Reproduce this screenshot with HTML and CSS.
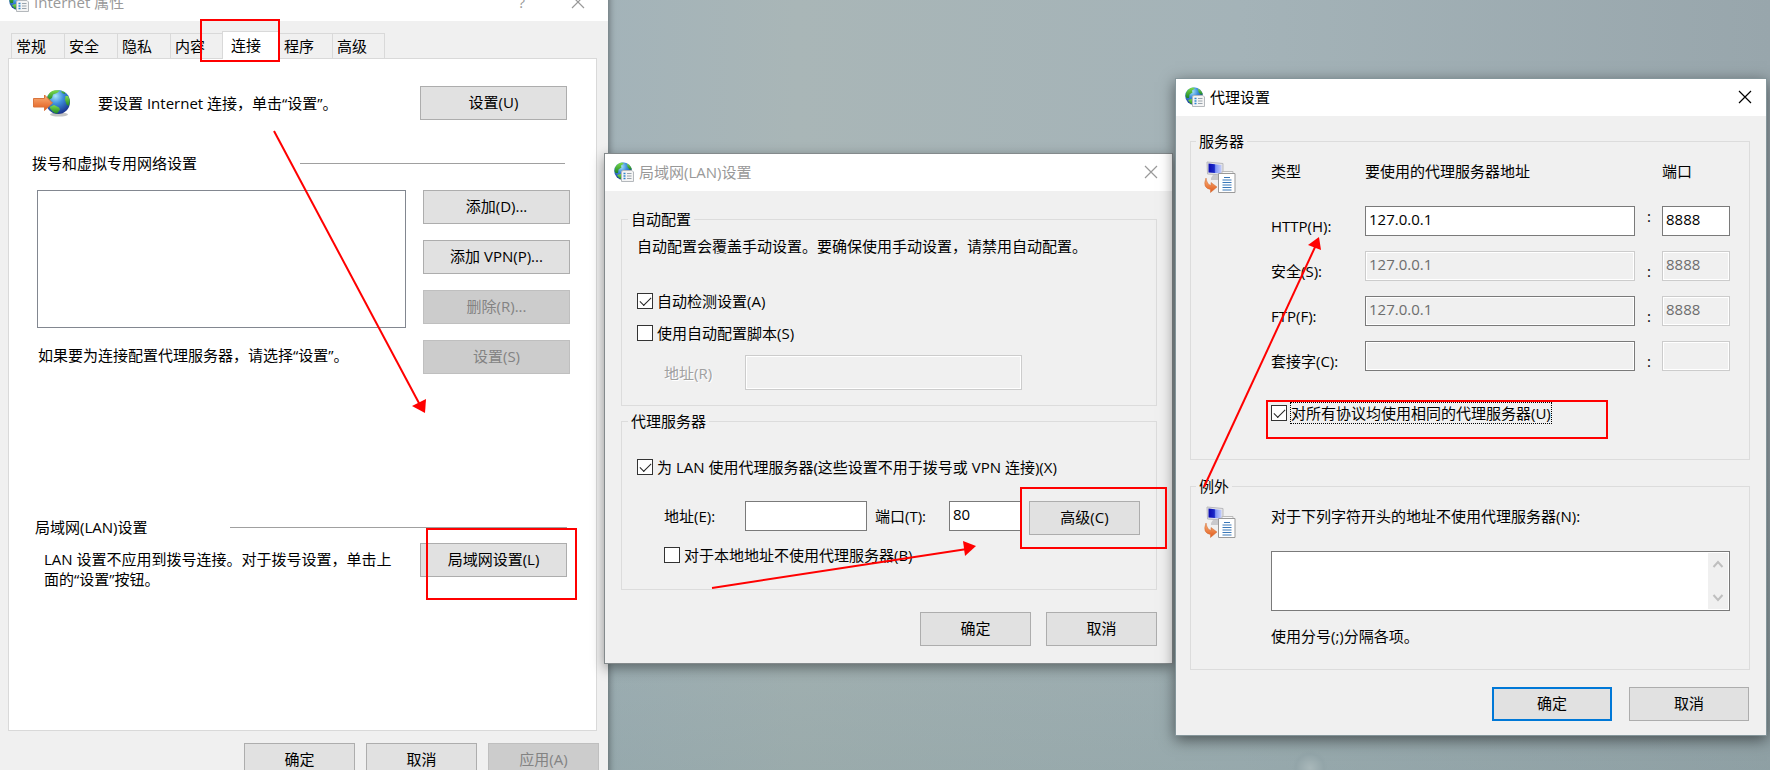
FILE: index.html
```html
<!DOCTYPE html>
<html lang="zh-CN">
  <head>
    <meta charset="UTF-8" />
    <meta name="viewport" content="width=device-width, initial-scale=1.0" />
    <title>Internet 属性</title>
    <link rel="stylesheet" href="styles.css">
  </head>
  <body>
    <!-- shared icons -->
    <svg class="defs" width="0" height="0" aria-hidden="true">
      <defs>
        <radialGradient id="sea" cx="0.4" cy="0.25" r="0.8">
          <stop offset="0" stop-color="#a9e4fb" />
          <stop offset="0.4" stop-color="#3f8fdc" />
          <stop offset="1" stop-color="#152a86" />
        </radialGradient>
        <linearGradient id="land" x1="0" y1="0" x2="0" y2="1">
          <stop offset="0" stop-color="#7fdc4a" />
          <stop offset="1" stop-color="#1c8428" />
        </linearGradient>
        <linearGradient id="orange" x1="0" y1="0" x2="0" y2="1">
          <stop offset="0" stop-color="#fbb27a" />
          <stop offset="1" stop-color="#e0591a" />
        </linearGradient>
        <linearGradient id="screen" x1="0" y1="0" x2="1" y2="0">
          <stop offset="0" stop-color="#0a0ab0" />
          <stop offset="0.45" stop-color="#1a28c8" />
          <stop offset="0.55" stop-color="#7f95f5" />
          <stop offset="1" stop-color="#c3cdfb" />
        </linearGradient>
      </defs>
      <symbol id="icon-globe-list" viewBox="0 0 20 20">
        <circle cx="9" cy="9" r="8.8" fill="url(#sea)" />
        <path d="M1 6Q3 1 8 .5L10 1.5 7 3.5 7.500 5.500 4.500 7.500 4 11 1.500 11Q0 9 1 6Z" fill="url(#land)" />
        <path d="M13 1.500Q17 3.500 17.700 7.500L15.500 7.500 13.500 5Z" fill="url(#land)" />
        <path d="M3 13L7 12 8.500 17.700Q5 17 3 13Z" fill="url(#land)" />
        <path d="M7.500 9.500L9 8.500H18L19.500 10V19.500H7.500Z" fill="#f4f4f4" stroke="#b4b8bc" />
        <path d="M9.500 11.500h2M9.500 14h2M9.500 16.500h2" stroke="#2f86d0" stroke-width="1.400" />
        <path d="M13 11.500h4.500M13 14h4.500M13 16.500h4.500" stroke="#9aa4ad" />
      </symbol>
      <symbol id="icon-connect" viewBox="0 0 38 28">
        <ellipse cx="26" cy="25.500" rx="9" ry="2" fill="#c4c4c4" />
        <circle cx="25" cy="13" r="12" fill="url(#sea)" />
        <path d="M14 9Q16 2 22 1.200L27 1.500 24 4 20 5.500 19 9 15 11.500Z" fill="url(#land)" />
        <path d="M16.500 18L21 16 26 18.500 27 20.500 24 24.800Q19 23.500 16.500 18Z" fill="url(#land)" />
        <path d="M32.500 7L35 7 36.800 11 36 17 33.500 15.500 32 11Z" fill="url(#land)" />
        <path d="M28 1.500L32 3.500 32 5 29 4Z" fill="url(#land)" />
        <path d="M.5 9.500H11.500V6L19.500 14 11.500 21.500V18H.5Z" fill="url(#orange)" stroke="#d9743c" />
      </symbol>
      <symbol id="icon-proxy" viewBox="0 0 32 32">
        <path d="M3 1L19 2.500V14L3.500 13Z" fill="#e4e4e6" stroke="#b9b9bd" />
        <path d="M4.500 2.500L17.500 4V12.500L4.500 11.500Z" fill="url(#screen)" />
        <path d="M9 14h5v3h3v2H7v-2z" fill="#c9c9cc" />
        <path d="M18 10.500H29V28H18Z" fill="#f6f6f6" stroke="#bbb" />
        <path d="M14.500 12.500H31V31.500H14.500Z" fill="#fff" stroke="#9a9a9a" />
        <path d="M20 16.500h6M18.500 19h9M18.500 21.500h9M18.500 24h9M18.500 26.500h9M18.500 29h9" stroke="#3a78b8" />
        <path d="M2 17Q-2 27 6.500 28.500V31.500L13 26 7 21.500V24.500Q3 23.500 2 17Z" fill="url(#orange)" stroke="#cf6a33" stroke-width="0.500" />
      </symbol>
      <symbol id="icon-close" viewBox="0 0 14 14">
        <path d="M1 1L13 13M13 1L1 13" fill="none" stroke="currentColor" stroke-width="1.200" />
      </symbol>
    </svg>

    <main class="desktop">
      <section class="window internet">
        <header class="titlebar">
          <svg class="app-icon"><use href="#icon-globe-list" /></svg>
          <h2>Internet 属性</h2>
          <button type="button" class="help-btn" aria-label="帮助">?</button>
          <button type="button" class="close-btn" aria-label="关闭"><svg><use href="#icon-close" /></svg></button>
        </header>
        <div class="tabs" role="tablist">
          <button type="button" role="tab">常规</button>
          <button type="button" role="tab">安全</button>
          <button type="button" role="tab">隐私</button>
          <button type="button" role="tab">内容</button>
          <button type="button" role="tab" class="active" aria-selected="true">连接</button>
          <button type="button" role="tab">程序</button>
          <button type="button" role="tab">高级</button>
        </div>
        <div class="panel">
          <div class="setup">
            <svg class="connect-icon"><use href="#icon-connect" /></svg>
            <p>要设置 Internet 连接，单击“设置”。</p>
            <button type="button" class="btn">设置(U)</button>
          </div>
          <div class="heading dial-heading">
            <h3>拨号和虚拟专用网络设置</h3>
            <hr>
          </div>
          <div class="dial">
            <div class="dial-left">
              <div class="listbox" role="listbox" aria-label="拨号和虚拟专用网络设置"></div>
              <p>如果要为连接配置代理服务器，请选择“设置”。</p>
            </div>
            <div class="dial-buttons">
              <button type="button" class="btn">添加(D)...</button>
              <button type="button" class="btn">添加 VPN(P)...</button>
              <button type="button" class="btn" disabled>删除(R)...</button>
              <button type="button" class="btn" disabled>设置(S)</button>
            </div>
          </div>
          <div class="heading lan-heading">
            <h3>局域网(LAN)设置</h3>
            <hr>
          </div>
          <div class="lan-row">
            <p>LAN 设置不应用到拨号连接。对于拨号设置，单击上面的“设置”按钮。</p>
            <button type="button" class="btn">局域网设置(L)</button>
          </div>
        </div>
        <footer class="actions">
          <button type="button" class="btn">确定</button>
          <button type="button" class="btn">取消</button>
          <button type="button" class="btn" disabled>应用(A)</button>
        </footer>
      </section>

      <section class="window lan">
        <header class="titlebar">
          <svg class="app-icon"><use href="#icon-globe-list" /></svg>
          <h2>局域网(LAN)设置</h2>
          <button type="button" class="close-btn" aria-label="关闭"><svg><use href="#icon-close" /></svg></button>
        </header>
        <form class="lan-form">
          <fieldset class="auto">
            <legend>自动配置</legend>
            <p>自动配置会覆盖手动设置。要确保使用手动设置，请禁用自动配置。</p>
            <div class="check">
              <input type="checkbox" id="auto-detect" checked />
              <label for="auto-detect">自动检测设置(A)</label>
            </div>
            <div class="check">
              <input type="checkbox" id="auto-script" />
              <label for="auto-script">使用自动配置脚本(S)</label>
            </div>
            <div class="script-row">
              <label for="script-url" class="dim">地址(R)</label>
              <input type="text" id="script-url" class="field" disabled />
            </div>
          </fieldset>
          <fieldset class="proxy">
            <legend>代理服务器</legend>
            <div class="check">
              <input type="checkbox" id="use-proxy" checked />
              <label for="use-proxy">为 LAN 使用代理服务器(这些设置不用于拨号或 VPN 连接)(X)</label>
            </div>
            <div class="address-row">
              <label for="address">地址(E):</label>
              <input type="text" id="address" class="field" />
              <label for="port" class="port-label">端口(T):</label>
              <input type="text" id="port" class="field port" value="80" />
              <button type="button" class="btn">高级(C)</button>
            </div>
            <div class="check nested">
              <input type="checkbox" id="bypass-local" />
              <label for="bypass-local">对于本地地址不使用代理服务器(B)</label>
            </div>
          </fieldset>
          <footer class="actions">
            <button type="button" class="btn">确定</button>
            <button type="button" class="btn">取消</button>
          </footer>
        </form>
      </section>

      <section class="window proxy-settings">
        <header class="titlebar">
          <svg class="app-icon"><use href="#icon-globe-list" /></svg>
          <h2>代理设置</h2>
          <button type="button" class="close-btn" aria-label="关闭"><svg><use href="#icon-close" /></svg></button>
        </header>
        <form class="proxy-form">
          <fieldset class="servers">
            <legend>服务器</legend>
            <div class="with-icon">
              <svg class="proxy-icon"><use href="#icon-proxy" /></svg>
              <div class="content">
                <div class="server-row head">
                  <span>类型</span>
                  <span>要使用的代理服务器地址</span>
                  <span></span>
                  <span>端口</span>
                </div>
                <div class="server-row first">
                  <label for="http">HTTP(H):</label>
                  <input type="text" id="http" class="field" value="127.0.0.1" />
                  <span class="colon">:</span>
                  <input type="text" class="field" aria-label="HTTP 端口" value="8888" />
                </div>
                <div class="server-row">
                  <label for="secure">安全(S):</label>
                  <input type="text" id="secure" class="field" value="127.0.0.1" disabled />
                  <span class="colon">:</span>
                  <input type="text" class="field" aria-label="安全端口" value="8888" disabled />
                </div>
                <div class="server-row">
                  <label for="ftp">FTP(F):</label>
                  <input type="text" id="ftp" class="field dark" value="127.0.0.1" disabled />
                  <span class="colon">:</span>
                  <input type="text" class="field" aria-label="FTP 端口" value="8888" disabled />
                </div>
                <div class="server-row">
                  <label for="socks">套接字(C):</label>
                  <input type="text" id="socks" class="field dark" disabled />
                  <span class="colon">:</span>
                  <input type="text" class="field" aria-label="套接字端口" disabled />
                </div>
                <div class="check">
                  <input type="checkbox" id="same-proxy" checked />
                  <label for="same-proxy" class="focused">对所有协议均使用相同的代理服务器(U)</label>
                </div>
              </div>
            </div>
          </fieldset>
          <fieldset class="exceptions">
            <legend>例外</legend>
            <div class="with-icon">
              <svg class="proxy-icon"><use href="#icon-proxy" /></svg>
              <div class="content">
                <label for="bypass">对于下列字符开头的地址不使用代理服务器(N):</label>
                <div class="memo">
                  <textarea id="bypass"></textarea>
                  <div class="scroll" aria-hidden="true">
                    <svg viewBox="0 0 12 8"><path d="M1.500 7L6 2 10.500 7" /></svg>
                    <svg viewBox="0 0 12 8"><path d="M1.500 1L6 6 10.500 1" /></svg>
                  </div>
                </div>
                <p>使用分号(;)分隔各项。</p>
              </div>
            </div>
          </fieldset>
          <footer class="actions">
            <button type="button" class="btn default">确定</button>
            <button type="button" class="btn">取消</button>
          </footer>
        </form>
      </section>

      <!-- red boxes and arrows over the windows -->
      <svg class="marks" width="1770" height="770" aria-hidden="true">
        <g class="boxes">
          <rect x="201" y="20" width="78" height="41" />
          <rect x="427" y="529" width="149" height="70" />
          <rect x="1021" y="488" width="145" height="60" />
          <rect x="1267" y="401" width="340" height="37" />
        </g>
        <g class="arrows">
          <path d="M274 131L420 405" />
          <path d="M712 588L967 549" />
          <path d="M1204 487L1316 245" />
        </g>
        <g class="heads">
          <path d="M425 413L412 406L426 399Z" />
          <path d="M976 546L963 541L965 556Z" />
          <path d="M1319 237L1308 245L1321 250Z" />
        </g>
      </svg>
    </main>
  </body>
</html>
```

FILE: styles.css
```css
* {
  box-sizing: border-box;
}
body {
  margin: 0;
  overflow: hidden;
  font: 15px/20px "Open Sans", "Noto Sans CJK SC", sans-serif;
  color: #000;
}
h2,
h3,
p {
  margin: 0;
  font-size: 15px;
  font-weight: normal;
}
button,
input,
textarea {
  font: inherit;
  color: inherit;
}
.defs {
  position: absolute;
}
.desktop {
  position: relative;
  min-height: 100vh;
  overflow: hidden;
  background:
    radial-gradient(circle at 1310px 768px, #a9b8ba 0, #93a5a9 14px, transparent 18px),
    linear-gradient(to bottom, transparent 60%, rgba(120, 145, 145, 0.3)),
    linear-gradient(to right, #a3b3b9 34%, #a9b6b7 45%, #a4b3b8 70%, #98a6ac);
}

/* windows */
.window {
  position: absolute;
  z-index: 0;
  background-color: #f0f0f0;
}
.internet {
  left: 0;
  top: -16px;
  width: 608px;
  box-shadow: 0 0 8px rgba(0, 0, 0, 0.5);
}
.lan {
  left: 604px;
  top: 153px;
  width: 569px;
  border: 1px solid #848a8c;
  box-shadow: 0 4px 12px rgba(0, 0, 0, 0.4);
}
.proxy-settings {
  left: 1175px;
  top: 78px;
  width: 592px;
  border: 1px solid #84959a;
  box-shadow: 0 4px 14px rgba(0, 0, 0, 0.5);
}
.titlebar {
  display: flex;
  align-items: center;
  height: 37px;
  padding: 0 14px 1px 9px;
  background-color: #fff;
}
.titlebar h2 {
  flex: 1;
  margin-left: 5px;
}
.internet .titlebar,
.lan .titlebar {
  color: #999;
}
.internet .titlebar {
  padding-right: 23px;
}
.app-icon {
  width: 20px;
  height: 20px;
}
.close-btn,
.help-btn {
  display: flex;
  padding: 0;
  border: none;
  background: none;
}
.help-btn {
  margin-right: 46px;
}
.close-btn svg {
  width: 14px;
  height: 14px;
}

/* controls */
.btn {
  width: 111px;
  height: 34px;
  padding: 0 0 2px;
  border: 1px solid #adadad;
  background-color: #e1e1e1;
}
.btn:disabled {
  border-color: #bfbfbf;
  background-color: #ccc;
  color: #838383;
}
.btn.default {
  border: 2px solid #0078d7;
}
.field {
  min-width: 0;
  width: 100%;
  height: 30px;
  padding: 0 4px 4px 3px;
  border: 1px solid #7a7a7a;
  border-radius: 0;
  background-color: #fff;
}
.field:disabled {
  border-color: #ccc;
  background-color: #f0f0f0;
  color: #6d6d6d;
  box-shadow: inset 0 0 0 1px #fff;
}
.field.dark {
  border-color: #7a7a7a;
}
.check {
  display: flex;
  align-items: center;
}
.check input {
  appearance: none;
  display: grid;
  width: 16px;
  height: 16px;
  margin: 0 4px 0 0;
  border: 1px solid #333;
  background-color: #fff;
}
.check input:checked::before {
  content: "";
  width: 10px;
  height: 5px;
  margin: 3px 2px;
  border-left: 1px solid #222;
  border-bottom: 1px solid #222;
  transform: rotate(-45deg);
}
fieldset {
  min-width: 0;
  margin: 0;
  padding: 0 16px 0 15px;
  border: 1px solid #dcdcdc;
}
legend {
  margin-left: -9px;
  padding: 0 3px;
}
.actions {
  display: flex;
  justify-content: flex-end;
}

/* Internet properties */
.tabs {
  display: flex;
  align-items: flex-end;
  height: 37px;
  padding-left: 11px;
}
.tabs button {
  width: 53px;
  height: 25px;
  padding: 0 0 0 4px;
  border: 1px solid #d9d9d9;
  border-width: 1px 0 0 1px;
  background-color: #f0f0f0;
  text-align: left;
}
.tabs button:last-child {
  border-right-width: 1px;
}
.tabs .active {
  z-index: 1;
  width: 58px;
  height: 28px;
  margin: 0 -1px -1px;
  padding: 0 0 2px 8px;
  background-color: #fff;
}
.panel {
  min-height: 673px;
  margin: 0 11px 0 8px;
  padding: 27px 29px 0 23px;
  border: 1px solid #d9d9d9;
  background-color: #fff;
}
.setup {
  display: flex;
  align-items: center;
}
.connect-icon {
  width: 38px;
  height: 28px;
  margin: 0 27px 0 1px;
}
.panel .btn {
  flex: none;
  width: 147px;
}
.setup .btn {
  margin-left: auto;
}
.heading {
  display: grid;
  align-items: center;
}
.heading hr {
  width: 100%;
  margin: 0;
  border: none;
  border-top: 1px solid #a0a0a0;
}
.dial-heading {
  grid-template-columns: 268px 1fr;
  margin: 33px 2px 0 0;
}
.lan-heading {
  grid-template-columns: 195px 1fr;
  margin: 143px 0 0 3px;
}
.dial {
  display: flex;
  gap: 17px;
  margin: 17px -3px 0 5px;
}
.dial-left {
  flex: 1;
}
.dial-left p {
  margin: 17px 0 0 1px;
}
.listbox {
  height: 138px;
  border: 1px solid #828790;
}
.dial-buttons {
  display: grid;
  gap: 16px;
}
.lan-row {
  display: flex;
  justify-content: space-between;
  padding: 6px 0 0 12px;
}
.lan-row p {
  width: 355px;
  padding-top: 6px;
}
.internet .actions {
  gap: 11px;
  padding: 12px 9px;
}

/* LAN settings */
.lan-form {
  padding: 18px 15px 17px 16px;
}
.auto {
  padding-bottom: 15px;
}
.auto p {
  margin: 7px 0 35px;
}
.auto .check {
  margin-bottom: 12px;
}
.script-row {
  display: grid;
  grid-template-columns: 81px 277px;
  align-items: center;
  padding-left: 27px;
}
.script-row .field {
  height: 35px;
}
.dim {
  color: #a0a0a0;
  text-shadow: 1px 1px #fff;
}
.proxy {
  margin-top: 5px;
  padding: 26px 16px 24px 15px;
}
.address-row {
  display: grid;
  grid-template-columns: 81px 122px 82px 72px 1fr;
  align-items: start;
  margin: 24px 0 10px;
  padding-left: 27px;
}
.address-row label {
  line-height: 30px;
}
.port-label {
  padding-left: 8px;
}
.port {
  border-right: none;
}
.address-row .btn {
  justify-self: end;
}
.nested {
  padding-left: 27px;
}
.lan-form .actions {
  gap: 15px;
  margin-top: 22px;
}

/* proxy settings */
.proxy-form {
  padding: 15px 16px 14px 14px;
}
.with-icon {
  display: flex;
  gap: 35px;
  padding-top: 10px;
}
.proxy-icon {
  flex: none;
  width: 32px;
  height: 32px;
}
.content {
  flex: 1;
}
.servers,
.exceptions {
  padding: 0 19px 0 13px;
}
.servers legend,
.exceptions legend {
  margin-left: -8px;
}
.server-row {
  display: grid;
  grid-template-columns: 94px 1fr 27px 68px;
  align-items: end;
  margin-bottom: 15px;
}
.server-row.head {
  margin-bottom: 25px;
}
.server-row .colon {
  padding-left: 12px;
}
.server-row.first .colon {
  align-self: start;
}
.servers .check {
  margin: 32px 0 36px;
}
.servers .check input {
  margin-right: 4px;
}
.focused {
  outline: 1px dotted #000;
}
.exceptions {
  margin-top: 16px;
}
.exceptions label {
  display: block;
}
.memo {
  display: flex;
  height: 60px;
  margin: 25px 0 15px;
  padding: 1px;
  border: 1px solid #7a7a7a;
  background-color: #fff;
}
.memo textarea {
  flex: 1;
  padding: 2px;
  border: none;
  outline: none;
  resize: none;
}
.scroll {
  display: flex;
  flex-direction: column;
  justify-content: space-between;
  width: 20px;
  padding: 7px 4px;
  background-color: #f0f0f0;
}
.scroll svg {
  height: 8px;
  fill: none;
  stroke: #bfbfbf;
  stroke-width: 2;
}
.exceptions p {
  margin-bottom: 23px;
}
.proxy-form .actions {
  gap: 17px;
  margin-top: 17px;
  padding-right: 1px;
}
.proxy-form .actions .btn {
  width: 120px;
}

/* marks */
.marks {
  position: absolute;
  left: 0;
  top: 0;
  pointer-events: none;
}
.boxes,
.arrows {
  fill: none;
  stroke: #f00;
  stroke-width: 2;
}
.heads {
  fill: #f00;
}
```
